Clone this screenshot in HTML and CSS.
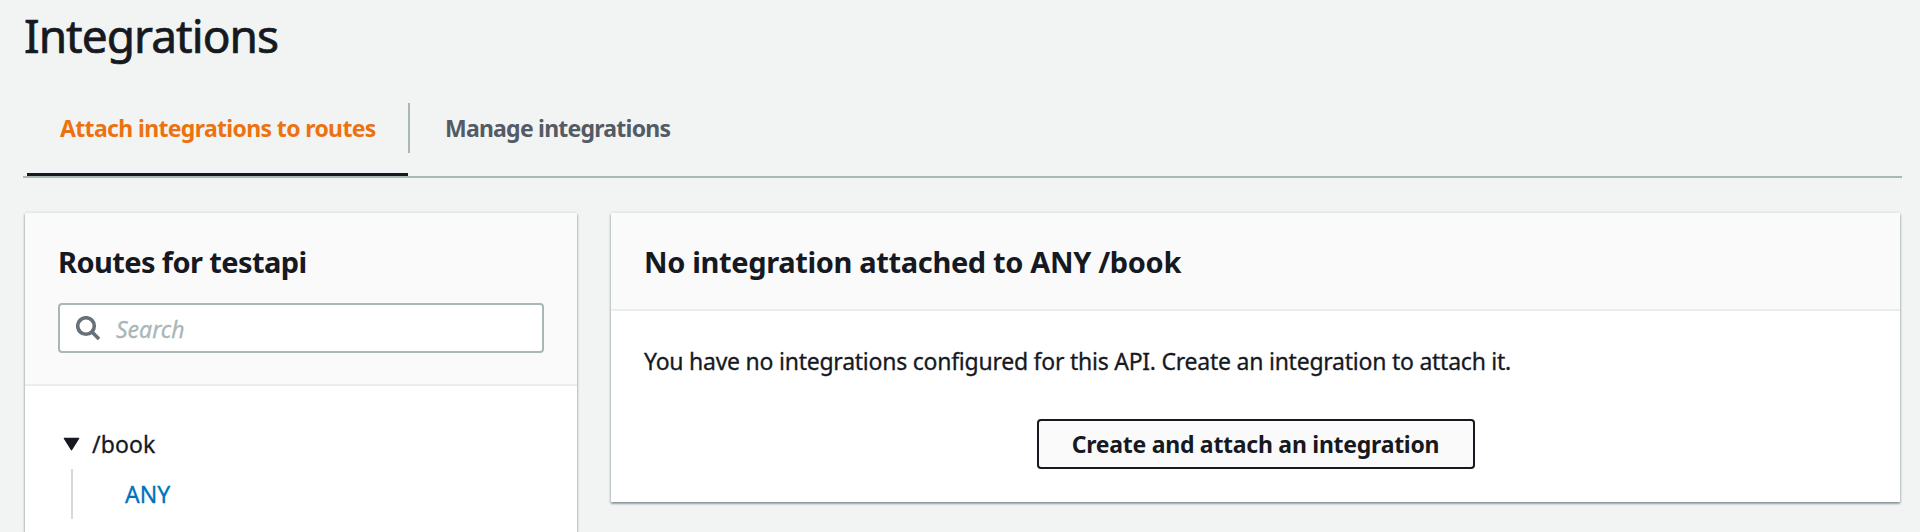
FILE: index.html
```html
<!DOCTYPE html>
<html lang="en">
<head>
<meta charset="utf-8">
<title>Integrations</title>
<link rel="stylesheet" href="styles.css">
</head>
<body>
<main class="page">
  <h1 class="title"><span>Integrations</span></h1>
  <nav class="tabs">
    <a class="tab tab-active"><span>Attach integrations to routes</span></a>
    <a class="tab tab-manage"><span>Manage integrations</span></a>
  </nav>
  <div class="columns">
    <section class="panel routes">
      <header class="panel-header">
        <h2 class="heading heading-routes"><span>Routes for testapi</span></h2>
        <div class="search">
          <svg class="search-icon" viewBox="0 0 24 24"><circle cx="10" cy="10" r="8.3"/><path d="M15.8 15.8 23 23"/></svg>
          <span class="placeholder">Search</span>
        </div>
      </header>
      <div class="tree">
        <div class="node">
          <svg class="caret" viewBox="0 0 18 14"><path d="M1.5 1h15L9 13z"/></svg>
          <span class="route">/book</span>
        </div>
        <div class="branch"><a class="method">ANY</a></div>
      </div>
    </section>
    <section class="panel detail">
      <header class="panel-header">
        <h2 class="heading heading-detail"><span>No integration attached to ANY /book</span></h2>
      </header>
      <div class="detail-body">
        <p class="message"><span>You have no integrations configured for this API. Create an integration to attach it.</span></p>
        <button class="button"><span>Create and attach an integration</span></button>
      </div>
    </section>
  </div>
</main>
</body>
</html>
```
FILE: styles.css
```css
* { box-sizing: border-box; }
body {
  margin: 0;
  height: 532px;
  overflow: hidden;
  background: #f2f4f3;
  color: #16191f;
  font-family: "Noto Sans", "Open Sans", sans-serif;
  font-size: 23px;
  white-space: nowrap;
}
h1, h2, p { margin: 0; }
.page { padding: 7px 18px 0 23px; }
.title {
  padding-left: 1px;
  font-size: 46px;
  font-weight: 400;
  line-height: 56px;
  letter-spacing: -0.95px;
  -webkit-text-stroke: 0.7px currentColor;
}
.tabs {
  display: flex;
  height: 115px;
  padding: 40px 0 0 4px;
  border-bottom: 2px solid #aab7b8;
}
.tab { height: 50px; line-height: 50px; font-weight: 700; color: #545b64; }
.tab-active {
  width: 381px;
  height: 73px;
  padding-left: 33px;
  border-bottom: 3px solid #16191f;
  color: #ec7211;
  letter-spacing: -0.65px;
}
.tab-manage { padding-left: 35px; border-left: 2px solid #aab7b8; letter-spacing: -0.77px; }
.columns { display: flex; gap: 34px; padding: 35px 0 0 2px; }
.panel {
  background: #fff;
  box-shadow: 0 2px 2px 0 rgba(0, 28, 36, .3), 1px 1px 2px 0 rgba(0, 28, 36, .15), -1px 1px 2px 0 rgba(0, 28, 36, .15), 0 -2px 0 0 #eaeded;
}
.routes { width: 552px; height: 319px; }
.detail { width: 1289px; height: 289px; }
.panel-header { padding: 31px 33px 29px; background: #fafafa; border-bottom: 2px solid #eaeded; }
.heading { font-size: 29px; line-height: 36px; font-weight: 700; }
.heading-routes { letter-spacing: -0.59px; }
.heading-detail { letter-spacing: -0.35px; }
.search {
  display: flex;
  align-items: center;
  height: 50px;
  margin: 23px 0 2px;
  padding-left: 16px;
  gap: 16px;
  background: #fff;
  border: 2px solid #aab7b8;
  border-radius: 4px;
}
.search-icon { width: 24px; height: 24px; fill: none; stroke: #687078; stroke-width: 3.6; }
.placeholder { padding-top: 2px; color: #aab7b8; font-style: italic; -webkit-text-stroke: 0.3px currentColor; }
.tree { padding: 33px 0 0 38px; }
.node { display: flex; align-items: center; gap: 11px; height: 50px; }
.caret { width: 17px; height: 14px; fill: #16191f; stroke: #16191f; stroke-width: 1.5; stroke-linejoin: round; }
.route { height: 50px; margin-left: 1px; line-height: 50px; letter-spacing: 0.1px; -webkit-text-stroke: 0.3px currentColor; }
.branch { height: 50px; margin-left: 8px; padding-left: 52px; border-left: 2px solid #d5dbdb; line-height: 50px; }
.method { color: #0073bb; -webkit-text-stroke: 0.3px currentColor; }
.detail-body { display: flex; flex-direction: column; align-items: center; padding: 35px 33px 0; }
.message { align-self: flex-start; line-height: 30px; letter-spacing: -0.24px; -webkit-text-stroke: 0.3px currentColor; }
.button {
  width: 438px;
  height: 50px;
  margin-top: 43px;
  padding: 0;
  background: #fafafa;
  border: 2px solid #16191f;
  border-radius: 4px;
  color: #16191f;
  font: 700 23px/46px "Noto Sans", "Open Sans", sans-serif;
  letter-spacing: -0.26px;
}
```
